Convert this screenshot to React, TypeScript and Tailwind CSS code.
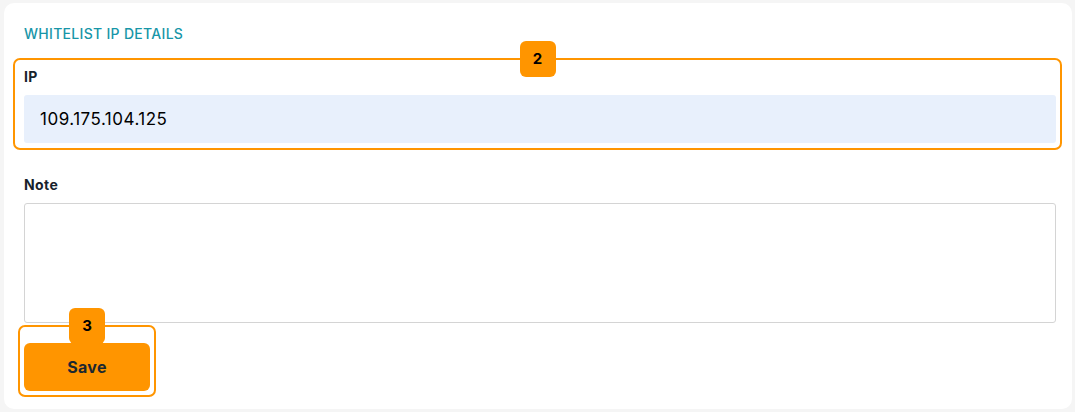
import { useState } from 'react';

// orange "tour step" frame drawn over a field, with the numbered tab on its top edge
function StepFrame({ n, className }: { n: number; className: string }) {
    return (
        <div className={`absolute border-2 border-[#ff9500] rounded-[7px] pointer-events-none flex justify-center items-start ${className}`}>
            <div className="-mt-[19px] w-9 h-9 rounded-md bg-[#ff9500] flex items-center justify-center text-[15px] font-bold text-black">
                {n}
            </div>
        </div>
    );
}

export default function App() {
    const [ip, setIp] = useState('109.175.104.125');
    const [note, setNote] = useState('');

    return (
        <div className="min-h-[412px] bg-[#f5f5f5] pt-[3px] pl-[4px] pr-[3px] pb-[3px]" style={{ fontFamily: 'Inter, "Noto Sans", sans-serif' }}>
            <div className="bg-white rounded-[10px] pl-5 pr-4 pt-[21px] pb-[18px] flex flex-col">
                <h3 className="text-[14px] leading-5 font-medium tracking-[0.3px] text-[#1796a8] uppercase">Whitelist IP Details</h3>

                {/* IP field */}
                <div className="relative mt-[23px] flex flex-col gap-2">
                    <StepFrame n={2} className="-left-[11px] -right-[6px] -top-[9px] -bottom-[7px]" />
                    <label className="text-[14px] leading-5 font-bold tracking-[0.4px] text-[#17222c]">IP</label>
                    <input
                        type="text"
                        value={ip}
                        onChange={(e) => setIp(e.target.value)}
                        className="w-full h-12 px-4 bg-[#e8f0fc] rounded-[3px] text-[17px] tracking-[0.5px] text-black outline-none"
                    />
                </div>

                {/* Note */}
                <div className="mt-8 flex flex-col gap-2">
                    <label className="text-[14px] leading-5 font-bold tracking-[0.4px] text-[#17222c]">Note</label>
                    <textarea
                        value={note}
                        onChange={(e) => setNote(e.target.value)}
                        className="w-full h-[120px] border border-[#d4d4d4] rounded-[3px] p-3 text-[15px] resize-none outline-none"
                    />
                </div>

                {/* Save */}
                <div className="mt-5 relative self-start">
                    <StepFrame n={3} className="-left-[6px] -right-[6px] -top-[18px] -bottom-[6px]" />
                    <button className="w-[126px] h-12 rounded-md bg-[#ff9500] text-[16px] font-bold tracking-[0.3px] text-[#1c2830]">
                        Save
                    </button>
                </div>
            </div>
        </div>
    );
}
